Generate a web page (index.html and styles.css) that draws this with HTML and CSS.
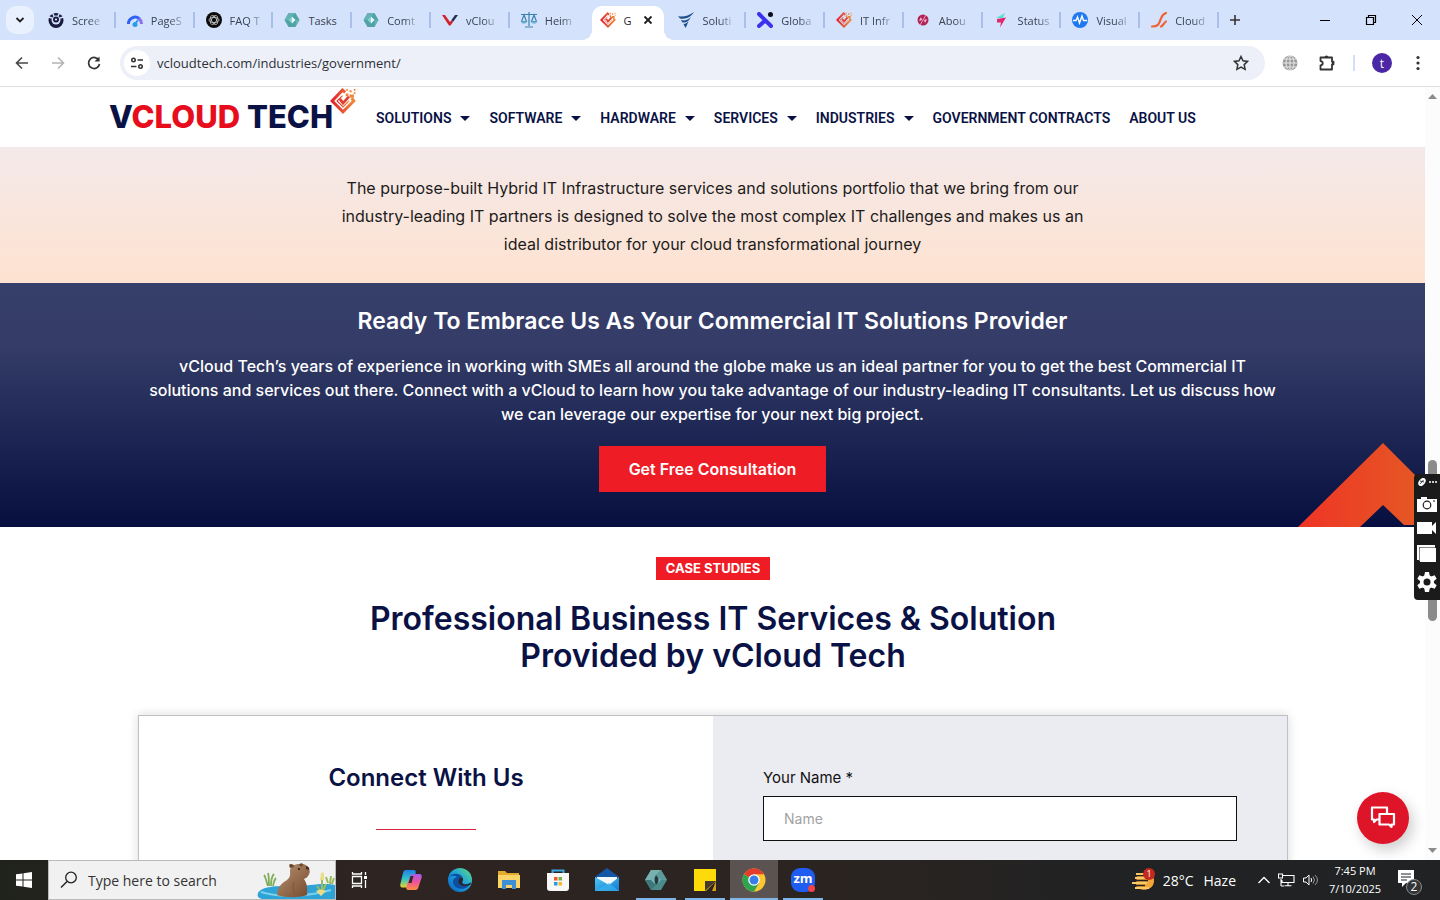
FILE: index.html
```html
<!DOCTYPE html>
<html lang="en">
<head>
  <meta charset="UTF-8">
  <meta name="viewport" content="width=device-width, initial-scale=1.0">
  <title>Government - vCloud Tech</title>
  <link rel="stylesheet" href="styles.css">
</head>
<body>
  <!-- shared symbols -->
  <svg class="defs" width="0" height="0" aria-hidden="true">
    <defs>
      <linearGradient id="brand" x1="0" y1="0" x2="1" y2="0">
        <stop offset="0" stop-color="#e2232b"/><stop offset="1" stop-color="#f08a3c"/>
      </linearGradient>
      <linearGradient id="arrow" x1="0" y1="0" x2="1" y2="0">
        <stop offset="0" stop-color="#ef3426"/><stop offset="1" stop-color="#e45a24"/>
      </linearGradient>
      <linearGradient id="edge" x1="0" y1="1" x2="1" y2="0">
        <stop offset="0" stop-color="#0b5fb8"/><stop offset="0.5" stop-color="#1b9de2"/><stop offset="1" stop-color="#5fe07a"/>
      </linearGradient>
      <linearGradient id="cop1" x1="0" y1="0" x2="0" y2="1">
        <stop offset="0" stop-color="#1f7fe8"/><stop offset="0.5" stop-color="#2fc3c9"/><stop offset="1" stop-color="#e8d32a"/>
      </linearGradient>
      <linearGradient id="cop2" x1="0" y1="0" x2="0" y2="1">
        <stop offset="0" stop-color="#a45cf0"/><stop offset="0.5" stop-color="#f0529a"/><stop offset="1" stop-color="#fb9040"/>
      </linearGradient>
      <linearGradient id="mailg" x1="0" y1="0" x2="1" y2="1">
        <stop offset="0" stop-color="#4cc8f4"/><stop offset="1" stop-color="#1478d4"/>
      </linearGradient>
      <linearGradient id="fur" x1="0" y1="0" x2="1" y2="1">
        <stop offset="0" stop-color="#b89470"/><stop offset="1" stop-color="#75492f"/>
      </linearGradient>
      <symbol id="mark" viewBox="0 0 24 24">
        <path d="M14 4 11.500 2 2 12l10 10 10-10-2-2.500" fill="none" stroke="url(#brand)" stroke-width="2.800"/>
        <path d="M11.500 7 6.500 12l5.500 5.500 5.500-5.500" fill="none" stroke="url(#brand)" stroke-width="1"/>
        <path d="m9 10 3 4 5.500-6" fill="none" stroke="#e2402c" stroke-width="2.600"/>
        <path d="M14.500 5h2.500v2.500h-2.500zM18 2h2v2h-2zM18 6h4v3h-4zM22 1h1.500v1.500H22zM15 1h1.500v1.500H15zM22 4h1.500v1.500H22z" fill="#ef8438"/>
      </symbol>
      <symbol id="hex" viewBox="0 0 16 16">
        <path d="M4.500 1h7l4 7-4 7h-7l-4-7z" fill="#4fa3a5"/>
        <path d="M4.500 1h7L8 4.500 4.500 8h-4zM11.500 15l4-7H12z" fill="#77bdbb" opacity=".6"/>
        <path d="M8 4.500 11.500 8 8 11.500z" fill="#e6fbff"/>
        <path d="M8 4.500 4.500 8 8 11.500z" fill="#8fd0d2"/>
      </symbol>
      <symbol id="hex-dark" viewBox="0 0 22 22">
        <path d="M6 1h10l6 10-6 10H6L0 11z" fill="#4b8b8c"/>
        <path d="M6 1h10l-5 5-5 5H0z" fill="#78b2b0"/>
        <path d="m16 1 6 10h-6l-5-5z" fill="#5d9b9b"/>
        <path d="M0 11h6l5 5-5 5z" fill="#3c7879"/>
        <path d="m11 6 5 5-5 5-5-5z" fill="#76b5b7"/>
        <path d="M11 6q5 5 0 10-3-5 0-10z" fill="#203a40"/>
      </symbol>
    </defs>
  </svg>

  <header class="tabstrip">
    <button class="tab-search" aria-label="Search tabs">
      <svg width="10" height="10" viewBox="0 0 10 10"><path d="m1.500 3 3.500 3.500L8.500 3" fill="none" stroke="#1f1f1f" stroke-width="1.800"/></svg>
    </button>
    <nav class="tabs" aria-label="Tabs">
      <a class="tab" href="#"><svg viewBox="0 0 16 16"><circle cx="8" cy="8.500" r="7.500" fill="#191b40"/><path d="M4 0l2 4M12 0l-2 4M0 5l4 1M16 5l-4 1" stroke="#d5e2fb" stroke-width="1.500"/><circle cx="8" cy="8" r="4.500" fill="#d5e2fb"/><circle cx="8" cy="7.500" r="3" fill="#191b40"/><circle cx="8" cy="7.500" r="1" fill="#fff"/></svg><span>Scree</span></a>
      <a class="tab" href="#"><svg viewBox="0 0 16 16"><path d="M1.500 12a6.500 6.500 0 0 1 11-5" fill="none" stroke="#2f63f2" stroke-width="3"/><path d="M12 6.500A7 7 0 0 1 14.500 12" fill="none" stroke="#8b6ef5" stroke-width="3"/><circle cx="8" cy="12.500" r="2.500" fill="#2a9cf0"/><path d="m8 12 3-4" stroke="#2a9cf0" stroke-width="2"/></svg><span>PageS</span></a>
      <a class="tab" href="#"><svg viewBox="0 0 16 16"><circle cx="8" cy="8" r="8" fill="#0c0c0c"/><g fill="none" stroke="#ccc" stroke-width=".8"><ellipse cx="8" cy="8" rx="5" ry="2.500"/><ellipse cx="8" cy="8" rx="5" ry="2.500" transform="rotate(60 8 8)"/><ellipse cx="8" cy="8" rx="5" ry="2.500" transform="rotate(120 8 8)"/></g></svg><span>FAQ T</span></a>
      <a class="tab" href="#"><svg><use href="#hex"/></svg><span>Tasks</span></a>
      <a class="tab" href="#"><svg><use href="#hex"/></svg><span>Comt</span></a>
      <a class="tab" href="#"><svg viewBox="0 0 16 16"><path d="M0 3h3l5 7 1.500-2L11 10l-2.500 3.500H7z" fill="#d3202f"/><path d="M9.500 8 13 3h3l-5 7z" fill="#26304a"/></svg><span>vClou</span></a>
      <a class="tab" href="#"><svg viewBox="0 0 16 16"><path d="M0 2.500h16M8 0v14M4 15h8M3 3 .5 9.500h5zM13 3l-2.500 6.500h5z" fill="none" stroke="#3a83ad" stroke-width="1.200"/><path d="M0 9.500h6c-.5 3-5.500 3-6 0zM10 9.500h6c-.5 3-5.500 3-6 0z" fill="#73b4d8"/></svg><span>Heim</span></a>
      <a class="tab active" href="#"><svg><use href="#mark"/></svg><span>G</span><svg class="close" viewBox="0 0 10 10"><path d="m1.500 1.500 7 7m0-7-7 7" stroke="#1f1f1f" stroke-width="1.800"/></svg></a>
      <a class="tab" href="#"><svg viewBox="0 0 16 16"><path d="M0 4c5 1.500 10 0 16-4-3 5-8 7.500-14 6.500zM3 8c4 1 7 0 10-3-2 4-5 6-8.500 5.500zM5.500 12c2 0 3.500-1 5-3-1 3-2 5-3 7z" fill="#1d4e89"/></svg><span>Soluti</span></a>
      <a class="tab" href="#"><svg viewBox="0 0 16 16"><path d="m2 2 12 12M9 9l-2.500 1L2 14" fill="none" stroke="#3c32ee" stroke-width="4" stroke-linecap="round"/><circle cx="13.500" cy="2.500" r="2.500" fill="#0c0c22"/></svg><span>Globa</span></a>
      <a class="tab" href="#"><svg><use href="#mark"/></svg><span>IT Infr</span></a>
      <a class="tab" href="#"><svg viewBox="0 0 16 16"><circle cx="8" cy="8" r="5.500" fill="#b32256"/><path d="m4 9 2-4 1 3zm8-2-2 4-1-3z" fill="#f0c9dc"/><path d="m5 13 6-10" stroke="#f0c9dc" stroke-width=".8"/></svg><span>Abou</span></a>
      <a class="tab" href="#"><svg viewBox="0 0 16 16"><path d="M2 6 11 1 9 6z" fill="#5ee0d0"/><path d="m3 7 9-1.500L6 15.500 7 10.500H3z" fill="#e3246f"/></svg><span>Status</span></a>
      <a class="tab" href="#"><svg viewBox="0 0 16 16"><circle cx="8" cy="8" r="8" fill="#1f78f0"/><path d="M1 8.500h3L5.500 5l2 6L10 4l1.500 4.500H15" fill="none" stroke="#fff" stroke-width="1.400"/></svg><span>Visual</span></a>
      <a class="tab" href="#"><svg viewBox="0 0 16 16"><path d="M1 14.500c7 0 7-3 9-8 1-3 2-4.500 5-5.500M10 14.500c2-1 2.500-3 5-5" fill="none" stroke="#ee6338" stroke-width="2.200" stroke-linecap="round"/></svg><span>Cloud</span></a>
    </nav>
    <button class="new-tab" aria-label="New tab"><svg width="12" height="12" viewBox="0 0 12 12"><path d="M6 1v10M1 6h10" stroke="#333" stroke-width="1.600"/></svg></button>
    <div class="window-buttons">
      <button aria-label="Minimize"><svg width="12" height="12" viewBox="0 0 12 12"><path d="M1 6.500h10" stroke="#000"/></svg></button>
      <button aria-label="Restore"><svg width="12" height="12" viewBox="0 0 12 12"><path d="M1.500 3.500h7v7h-7zM3.500 3.500v-2h7v7h-2" fill="none" stroke="#000" stroke-width="1.200"/></svg></button>
      <button aria-label="Close"><svg width="12" height="12" viewBox="0 0 12 12"><path d="m1 1 10 10m0-10L1 11" stroke="#000"/></svg></button>
    </div>
  </header>

  <div class="toolbar">
    <button aria-label="Back"><svg width="16" height="16" viewBox="0 0 16 16"><path d="M14 8H3M8 2.500 2.500 8 8 13.500" fill="none" stroke="#474747" stroke-width="1.600"/></svg></button>
    <button aria-label="Forward"><svg width="16" height="16" viewBox="0 0 16 16"><path d="M2 8h11M8 2.500 13.500 8 8 13.500" fill="none" stroke="#b4b4b4" stroke-width="1.600"/></svg></button>
    <button aria-label="Reload"><svg width="16" height="16" viewBox="0 0 16 16"><path d="M13 5.500A5.500 5.500 0 1 0 13.500 9" fill="none" stroke="#333" stroke-width="1.700"/><path d="M13.500 1.500v5h-5z" fill="#333"/></svg></button>
    <div class="address">
      <button class="site-info" aria-label="Site information"><svg width="14" height="14" viewBox="0 0 14 14"><g fill="none" stroke="#333" stroke-width="1.600"><circle cx="3.500" cy="4" r="1.700"/><path d="M7.500 4H13M1 10.500h5.500"/><circle cx="10.500" cy="10.500" r="1.700"/></g></svg></button>
      <input type="text" class="url" aria-label="Address" value="vcloudtech.com/industries/government/">
      <button class="star" aria-label="Bookmark"><svg width="16" height="16" viewBox="0 0 16 16"><path d="m8 1.500 2 4.300 4.600.6-3.400 3.200.9 4.700L8 12l-4.100 2.300.9-4.700L1.400 6.400 6 5.800z" fill="none" stroke="#333" stroke-width="1.500"/></svg></button>
    </div>
    <div class="extensions">
      <button aria-label="Translate extension"><svg width="16" height="16" viewBox="0 0 16 16"><circle cx="8" cy="8" r="7.500" fill="#999"/><path d="M8 0v16M0 8h16M1.500 4h13M1.500 12h13" fill="none" stroke="#e8e8e8"/><ellipse cx="8" cy="8" rx="4" ry="7.500" fill="none" stroke="#e8e8e8"/></svg></button>
      <button aria-label="Extensions"><svg width="18" height="18" viewBox="0 0 18 18"><path d="M2.500 3.500H14v4.200h1.500v2.600H14v5.200H2.500v-4.200c3-.5 3-3.800 0-4.200z" fill="none" stroke="#333" stroke-width="1.800" stroke-linejoin="round"/><path d="M6.500 3.500a2 2 0 0 1 4 0M14 7a2 2 0 0 1 0 4" fill="#333"/></svg></button>
      <span class="bar"></span>
      <button class="profile" aria-label="Profile">t</button>
      <button class="more" aria-label="Menu"><svg width="4" height="16" viewBox="0 0 4 16"><g fill="#333"><circle cx="2" cy="2.500" r="1.600"/><circle cx="2" cy="8" r="1.600"/><circle cx="2" cy="13.500" r="1.600"/></g></svg></button>
    </div>
  </div>

  <div class="viewport">
    <main class="page">
      <div class="site-header">
        <a class="logo" href="#" aria-label="vCloud Tech"><span>V<b>CLOUD</b> TECH</span><svg width="26" height="26"><use href="#mark"/></svg></a>
        <nav class="menu">
          <a class="has-sub" href="#">Solutions</a>
          <a class="has-sub" href="#">Software</a>
          <a class="has-sub" href="#">Hardware</a>
          <a class="has-sub" href="#">Services</a>
          <a class="has-sub" href="#">Industries</a>
          <a href="#">Government Contracts</a>
          <a href="#">About Us</a>
        </nav>
      </div>

      <section class="intro">
        <p>The purpose-built Hybrid IT Infrastructure services and solutions portfolio that we bring from our<br>industry-leading IT partners is designed to solve the most complex IT challenges and makes us an<br>ideal distributor for your cloud transformational journey</p>
      </section>

      <section class="cta">
        <h2>Ready To Embrace Us As Your Commercial IT Solutions Provider</h2>
        <p>vCloud Tech’s years of experience in working with SMEs all around the globe make us an ideal partner for you to get the best Commercial IT<br>solutions and services out there. Connect with a vCloud to learn how you take advantage of our industry-leading IT consultants. Let us discuss how<br>we can leverage our expertise for your next big project.</p>
        <a class="cta-btn" href="#contact">Get Free Consultation</a>
        <svg class="cta-arrow" width="127" height="84" viewBox="0 0 127 84"><path d="M0 84 85 0l42 42v40h-21L85 62 62 84z" fill="url(#arrow)"/></svg>
      </section>

      <section class="cases">
        <span class="badge">CASE STUDIES</span>
        <h2>Professional Business IT Services &amp; Solution<br>Provided by vCloud Tech</h2>
        <div class="contact" id="contact">
          <div class="contact-info">
            <h3>Connect With Us</h3>
            <hr>
          </div>
          <form class="contact-form">
            <label for="name">Your Name *</label>
            <input type="text" id="name" placeholder="Name">
          </form>
        </div>
      </section>
    </main>

    <div class="scrollbar">
      <svg width="9" height="5" viewBox="0 0 9 5"><path d="M0 5 4.500 0 9 5z" fill="#8b8b8b"/></svg>
      <div class="track"><div class="thumb"></div></div>
      <svg width="9" height="5" viewBox="0 0 9 5"><path d="m0 0 4.500 5L9 0z" fill="#8b8b8b"/></svg>
    </div>

    <button class="chat" aria-label="Chat">
      <svg width="26" height="24" viewBox="0 0 26 24"><g fill="none" stroke="#fff" stroke-width="2.200" stroke-linejoin="round"><path d="M9 13.500H6.500L4 16v-2.500H2v-12h15v6"/><path d="M9.500 8h14.500v10.500h-2.500V21L19 18.500H9.500z"/></g></svg>
    </button>
  </div>

  <aside class="recorder">
    <svg width="20" height="8" viewBox="0 0 20 8"><ellipse cx="5" cy="4" rx="4.500" ry="3" transform="rotate(-50 5 4)" fill="#fff"/><path d="m3 6 3.500-4M3 3l4 1" stroke="#1b1b1b" stroke-width=".8"/><path d="M12 4h2M15 4h2M18 4h2" stroke="#fff" stroke-width="1.600"/></svg>
    <button aria-label="Screenshot"><svg width="20" height="16" viewBox="0 0 20 16"><path d="M0 3h4V1h6v2h10v13H0z" fill="#fff"/><circle cx="10" cy="9" r="3.800" fill="none" stroke="#1b1b1b" stroke-width="1.200"/><path d="M16 5h2" stroke="#1b1b1b"/></svg></button>
    <button aria-label="Record"><svg width="20" height="14" viewBox="0 0 20 14"><path d="M0 1h15v4l4-4v12l-4-4v4H0z" fill="#fff"/></svg></button>
    <button aria-label="Gallery"><svg width="20" height="18" viewBox="0 0 20 18"><path d="M0 0h18v2H2v13H0z" fill="#fff"/><path d="M3 3h16v14H3z" fill="#fff"/><path d="M2.500 16V2.500H18" fill="none" stroke="#888"/></svg></button>
    <button aria-label="Settings"><svg width="20" height="20" viewBox="0 0 20 20"><g fill="#fff"><circle cx="10" cy="10" r="7"/><path d="M8 0h4l1 5H7zM8 20h4l1-5H7z"/><path d="M8 0h4l1 5H7zM8 20h4l1-5H7z" transform="rotate(60 10 10)"/><path d="M8 0h4l1 5H7zM8 20h4l1-5H7z" transform="rotate(120 10 10)"/></g><circle cx="10" cy="10" r="3.500" fill="#1b1b1b"/></svg></button>
  </aside>

  <footer class="taskbar">
    <button class="start" aria-label="Start"><svg width="16" height="16" viewBox="0 0 16 16"><path d="M0 2.300 6.500 1.400v6.100H0zM7.500 1.200 16 0v7.500H7.500zM0 8.500h6.500v6.100L0 13.700zM7.500 8.500H16V16l-8.500-1.200z" fill="#fff"/></svg></button>
    <div class="search">
      <svg width="18" height="18" viewBox="0 0 18 18"><circle cx="11" cy="6.500" r="5.300" fill="none" stroke="#222" stroke-width="1.300"/><path d="m7 10.500-6 6" stroke="#222" stroke-width="1.400"/></svg>
      <input type="text" aria-label="Search" placeholder="Type here to search">
      <svg class="capybara" width="78" height="36" viewBox="0 0 78 36">
        <path d="M1 30c4-7 18-7 34-7 18 0 31-4 43-1v14H5C1 35 0 33 1 30z" fill="#2ea3d8"/>
        <path d="M4 29c18 6 50 4 70-2" fill="none" stroke="#7cd0ee" stroke-width="2"/>
        <path d="M11 23c-2-5-2-9-4-11m5 11c0-7 0-10-1-13m3 13c0-6 1-10 3-12m-1 12c1-5 2-7 3-8" fill="none" stroke="#7fae5c" stroke-width="1.800"/>
        <path d="M20 32c0-8 5-12 10-15 4-3 3-6 3-10 1-4 5-6 9-6 4-1 8 1 10 4 1 3 1 6-1 8-1 2-3 2-4 3 2 3 4 7 3 16-8 3-22 3-30 0z" fill="url(#fur)"/>
        <path d="M33 5q-2-4 1-4t3 3zM42 2q2-3 4-1l-1 3z" fill="#6b4630"/>
        <circle cx="42" cy="6" r="1" fill="#211"/><path d="M49 3q4 1 3 4l-3-1z" fill="#4b2d20"/>
        <path d="M37 19c-2 4-1 9 1 12" fill="none" stroke="#7b5438"/>
        <path d="M65 31V14m0 16-5-7m5 6 4-8M71 20l-2-6m4 7 1-8m1 8 2-6" fill="none" stroke="#9cbb5c" stroke-width="2"/>
        <path d="M64 10q2-2 3 1v6h-4zM59 28q5-3 10 0l-5 5z" fill="#e7dc8a"/>
      </svg>
    </div>
    <nav class="apps" aria-label="Apps">
      <button class="task-view" aria-label="Task View"><svg width="18" height="16" viewBox="0 0 18 16"><path d="M1.500 4.500h9v7h-9zM1.500 0v2h9V0M1.500 16v-2h9v2M14.500 0v3M14.500 8v8" fill="none" stroke="#fff" stroke-width="1.300"/><path d="M13 4h3v3h-3z" fill="#fff"/></svg></button>
      <button aria-label="Copilot"><svg width="24" height="24" viewBox="0 0 24 24"><path d="M7 2h8c2 0 2 2 1.500 3.500L13 17c-.5 2-2 2.500-4 2.500H4c-3 0-3-2-2.500-4L4 5c.5-2 1-3 3-3z" fill="url(#cop1)"/><path d="M14.500 6H20c3 0 3 2 2.500 4l-3 9c-.5 2-1.500 3-3.500 3H9c-1.500 0-2-1.500-1.500-3L11 8c.5-1.500 1.500-2 3.500-2z" fill="url(#cop2)"/><path d="m11.500 8-2 7h3l2-7z" fill="#342a2a"/></svg></button>
      <button aria-label="Edge"><svg width="24" height="24" viewBox="0 0 24 24"><circle cx="12" cy="12" r="12" fill="url(#edge)"/><path d="M1 9c3-5 13-4 14 2 0 2-1.500 3-1 4 1 2 6 2 9-1-3 8-13 9-17 3-2-3-1-7 3-8-4-2-7-1-8 0z" fill="#0d4f9e"/><path d="M12 10c3-1 4 2 2 4 0 3 5 3 9 1l-.5 1.500c-5 3-12 1-12-3 0-1.500.5-2.500 1.500-3.500z" fill="#2c2423"/></svg></button>
      <button aria-label="File Explorer"><svg width="22" height="20" viewBox="0 0 22 20"><path d="M0 1h7l2 2h12v15H0z" fill="#e5a92d"/><path d="M0 5h22v13H0z" fill="#fbd567"/><path d="M4 10h14v9h-4v-4H8v4H4z" fill="#3f8fd6"/></svg></button>
      <button aria-label="Store"><svg width="24" height="24" viewBox="0 0 24 24"><path d="M6.500 6V2.500h11V6" fill="none" stroke="#39a9df" stroke-width="2"/><path d="M1 5h22v15q0 3-3 3H4q-3 0-3-3z" fill="#f7f7f7"/><path d="M8 9h3.500v3.500H8z" fill="#ea5a2b"/><path d="M12.500 9H16v3.500h-3.500z" fill="#75b043"/><path d="M8 14h3.500v3.500H8z" fill="#2b9be0"/><path d="M12.500 14H16v3.500h-3.500z" fill="#f4b82a"/></svg></button>
      <button aria-label="Mail"><svg width="24" height="24" viewBox="0 0 24 24"><path d="M0 9 12 0l12 9v3H0z" fill="#1457a6"/><path d="M2 9h20v8H2z" fill="#f2f8fc"/><path d="m0 9 14 8L24 9v14H0z" fill="url(#mailg)"/><path d="M0 23 14 15l10 8z" fill="#39b4ec" opacity=".7"/></svg></button>
      <button class="open" aria-label="Time tracker"><svg width="22" height="22"><use href="#hex-dark"/></svg></button>
      <button class="open" aria-label="Sticky Notes"><svg width="22" height="22" viewBox="0 0 22 22"><path d="M0 0h22v12L12 22H0z" fill="#fddb0a"/><path d="M11 12h11L11 22z" fill="#443b2e"/><path d="m22 12-4 10h4z" fill="#d69c19"/></svg></button>
      <button class="open current" aria-label="Chrome"><svg width="24" height="24" viewBox="0 0 24 24"><circle cx="12" cy="12" r="11.500" fill="#fbc62f"/><path d="M12 12 2 6.200A11.500 11.500 0 0 1 22 6.200H12z" fill="#e33b2e"/><path d="M12 12 2 6.200A11.500 11.500 0 0 0 12 23.500l5-8.500z" fill="#2da44e"/><circle cx="12" cy="12" r="5.800" fill="#fff"/><circle cx="12" cy="12" r="4.500" fill="#3b7de8"/></svg></button>
      <button class="open zoom-app" aria-label="Zoom"><span>zm</span></button>
    </nav>
    <div class="tray">
      <button class="weather"><svg width="26" height="24" viewBox="0 0 26 24"><path d="M6 5h12a9 9 0 0 1 5 9 10 9 0 0 1-18 4z" fill="#f3a738"/><path d="M5 7.500h11M2 12.500h15M1 17.500h13" stroke="#202224" stroke-width="1.500"/><path d="M5 6h11M4 10h11M1 15h15M4 20h14" stroke="#fbc868" stroke-width="2"/><circle cx="18" cy="6" r="6" fill="#c4291f"/><text x="18" y="9" text-anchor="middle" class="weather-count">1</text></svg><span>28°C</span><span>Haze</span></button>
      <button aria-label="Show hidden icons"><svg width="12" height="8" viewBox="0 0 12 8"><path d="m.5 7 5.500-5.500L11.500 7" fill="none" stroke="#fff" stroke-width="1.300"/></svg></button>
      <button aria-label="Network"><svg width="17" height="14" viewBox="0 0 17 14"><path d="M5 2.500h11v7H4V7M10 9.500v3M6.500 12.800h7M3 6v7M.5 1h4v4h-4zM3 13h3" fill="none" stroke="#fff" stroke-width="1.100"/></svg></button>
      <button aria-label="Volume"><svg width="16" height="12" viewBox="0 0 16 12"><path d="M.5 4H3l3-3v10L3 8H.5z" fill="none" stroke="#fff"/><path d="M8 4q1.500 2 0 4" fill="none" stroke="#fff"/><path d="M10 2.500q3 3.500 0 7M12 1q5 5 0 10" fill="none" stroke="#999"/></svg></button>
      <div class="clock"><time>7:45 PM</time><time>7/10/2025</time></div>
      <button class="notes" aria-label="Notifications"><svg width="26" height="32" viewBox="0 0 26 32"><path d="M0 6h16v13H8l-4 4v-4H0z" fill="#fff"/><path d="M3 10h10M3 13h10M3 16h6" stroke="#202224" stroke-width="1.200"/><circle cx="16" cy="23" r="7.500" fill="#323436" stroke="#8a8a8a"/><text x="16" y="27" text-anchor="middle" class="note-count">2</text></svg></button>
    </div>
  </footer>
</body>
</html>
```
FILE: styles.css
```css
* { box-sizing: border-box; }
html, body { height: 100%; margin: 0; }
body {
  display: flex;
  flex-direction: column;
  overflow: hidden;
  background: #fff;
  font-family: Inter, "Liberation Sans", sans-serif;
  color: #0a1245;
}
a { color: inherit; text-decoration: none; }
button { flex: none; border: 0; padding: 0; background: none; font: inherit; color: inherit; display: flex; align-items: center; justify-content: center; cursor: pointer; }
input { font: inherit; }
svg { flex: none; display: block; }
.defs { position: absolute; }

/* browser tabs */
.tabstrip, .toolbar, .taskbar { font-family: "Open Sans", "Noto Sans", sans-serif; flex: none; }
.tabstrip { display: flex; height: 40px; background: #d4e2fc; }
.tab-search { width: 28px; height: 28px; margin: 6px 3px 0 6px; border-radius: 10px; background: #eaf1fe; }
.tabs { flex: 1; min-width: 0; display: grid; grid-auto-flow: column; grid-auto-columns: minmax(0, 1fr); }
.tab {
  position: relative;
  display: flex;
  align-items: center;
  gap: 8px;
  padding: 0 4px 0 11px;
  font-size: 11px;
  color: #3a4252;
}
.tab svg { width: 16px; height: 16px; }
.tab span {
  white-space: nowrap;
  -webkit-mask-image: linear-gradient(to right, #000 60%, rgba(0, 0, 0, .3));
  mask-image: linear-gradient(to right, #000 60%, rgba(0, 0, 0, .3));
}
.tab::after { content: ""; position: absolute; right: 0; top: 12px; width: 2px; height: 16px; background: #a9bfe9; }
.tab:nth-child(4) span, .tab.active span { -webkit-mask-image: none; mask-image: none; }
.tab:nth-child(7)::after { display: none; }
.tab.active { color: #1f1f1f; padding-right: 14px; z-index: 1; }
.tab.active::before {
  content: "";
  position: absolute;
  z-index: -1;
  top: 6px; bottom: 0; left: 3px; right: 3px;
  border-radius: 10px 10px 0 0;
  background: #fff;
}
.tab.active::after {
  z-index: -1;
  top: auto; bottom: 0; left: -7px; right: -7px;
  width: auto;
  height: 10px;
  background:
    radial-gradient(circle at 0 0, transparent 10px, #fff 10px) left / 10px 10px no-repeat,
    radial-gradient(circle at 100% 0, transparent 10px, #fff 10px) right / 10px 10px no-repeat;
}
.tab .close { width: 10px; height: 10px; margin-left: auto; }
.new-tab { width: 28px; margin: 0 53px 0 2px; }
.window-buttons { display: flex; }
.window-buttons button { width: 46px; }

/* address row */
.toolbar { display: flex; align-items: center; height: 47px; padding: 0 4px; border-bottom: 1px solid #dcdfe3; background: #fff; }
.toolbar > button { width: 36px; height: 34px; }
.address { flex: 1; display: flex; align-items: center; height: 34px; margin-left: 8px; padding: 0 16px 0 4px; border-radius: 17px; background: #edf0f9; }
.site-info { width: 26px; height: 26px; border-radius: 50%; background: #fff; }
.url { flex: 1; padding: 0 7px; border: 0; outline: 0; background: none; font-size: 13px; color: #2d3036; }
.extensions { display: flex; align-items: center; gap: 20px; padding: 0 16px 0 17px; }
.bar { width: 2px; height: 16px; margin: 0 -3px; background: #d4dff4; }
.profile { width: 20px; height: 20px; border-radius: 50%; background: #4c27a5; color: #fff; font-size: 12px; }
.more { margin-left: 4px; }

/* page */
.viewport { position: relative; flex: 1; min-height: 0; display: flex; overflow: hidden; }
.page { flex: 1; min-width: 0; overflow: hidden; }
.site-header { display: flex; align-items: center; height: 61px; padding: 0 109px; border-bottom: 1px solid #efe9ea; }
.logo { display: flex; width: 246px; font-size: 31px; font-weight: 800; line-height: 60px; white-space: nowrap; }
.logo b { font-weight: 800; color: #e70d1c; }
.logo svg { margin: 1px 0 0 -3px; }
.menu { display: flex; gap: 19px; margin-left: 21px; padding-top: 2px; font-family: Roboto, "Liberation Sans", sans-serif; font-size: 14px; font-weight: 600; line-height: 18px; text-transform: uppercase; white-space: nowrap; }
.has-sub { display: flex; align-items: center; gap: 9px; }
.has-sub::after { content: ""; border: 5px solid transparent; border-top-color: #0a1245; border-bottom: 0; }

.intro { height: 135px; padding: 26px 20px; background: linear-gradient(#f4e9e9, #fee2d0); color: #1c1c1c; text-align: center; font-size: 16px; line-height: 28px; }
.intro p { margin: 0; }

.cta { position: relative; height: 244px; padding: 22px 20px 0; background: linear-gradient(#363f69, #343c67 25%, #070f40); color: #fff; text-align: center; }
.cta h2 { margin: 0 0 17px; font-size: 23px; font-weight: 600; line-height: 32px; }
.cta p { margin: 0 0 20px; font-size: 16px; font-weight: 500; line-height: 24px; }
.cta-btn { display: inline-block; padding: 0 30px; background: #ee1c25; font-size: 16px; font-weight: 600; line-height: 46px; }
.cta-arrow { position: absolute; right: 0; bottom: 0; }

.cases { padding: 30px 137px 0 138px; text-align: center; }
.badge { display: inline-block; padding: 0 10px; background: #f01c25; color: #fff; font-size: 13px; font-weight: 700; line-height: 23px; }
.cases h2 { margin: 20px 0 41px; font-size: 32px; font-weight: 600; line-height: 37px; }
.contact { display: grid; grid-template-columns: 1fr 1fr; border: 1px solid #bfc0c6; box-shadow: 0 0 10px rgba(0, 0, 0, .15); height: 400px; }
.contact-info { padding: 46px 20px; }
.contact-info h3 { margin: 0; font-size: 24px; font-weight: 600; line-height: 32px; }
.contact-info hr { width: 100px; height: 1px; margin: 35px auto; border: 0; background: #d81f3c; }
.contact-form { padding: 50px; background: #ebecf1; text-align: left; }
.contact-form label { display: block; margin-bottom: 6px; font-size: 15px; line-height: 24px; color: #111; }
.contact-form input { width: 100%; height: 45px; padding: 0 20px; border: 1px solid #111; background: #fff; font-size: 14px; }
.contact-form input::placeholder { color: #a2a2a2; }

.scrollbar { width: 15px; display: flex; flex-direction: column; align-items: center; padding: 7px 0; background: #fcfcfc; }
.track { flex: 1; display: flex; flex-direction: column; margin: 4px 0; }
.track::before { content: ""; flex: 359; }
.thumb { flex: 162; width: 9px; border-radius: 5px; background: #8b8b8b; }
.track::after { content: ""; flex: 224; }

.chat { position: absolute; right: 31px; bottom: 16px; width: 52px; height: 52px; border-radius: 50%; background: #de1529; box-shadow: 4px 6px 14px rgba(0, 0, 0, .2); }

/* floating capture bar */
.recorder { position: fixed; right: 0; top: 474px; width: 26px; padding: 4px 3px 8px; display: flex; flex-direction: column; justify-content: space-between; height: 126px; border-radius: 4px 0 0 4px; background: #1b1b1b; }

/* taskbar */
.taskbar { display: flex; height: 40px; background: linear-gradient(to right, #20221c, #2e2422 25%, #2a2421 60%, #202224 80%); color: #fff; }
.start { width: 48px; }
.search { display: flex; align-items: center; width: 288px; padding-left: 11px; border: 1px solid #bbb; background: #f1f1f1; }
.search input { flex: 1; min-width: 0; padding: 0 0 0 10px; border: 0; outline: 0; background: none; font-size: 14px; }
.search input::placeholder { color: #333; }
.capybara { align-self: flex-end; }
.apps { display: flex; gap: 1px; }
.apps button { position: relative; width: 48px; }
.apps .task-view { margin-right: 2px; }
.open::after { content: ""; position: absolute; bottom: 0; left: 4px; right: 4px; height: 2px; background: #7fb6e6; }
.current { background: #5a5352; }
.current::after { left: 0; right: 0; }
.zoom-app span { position: relative; width: 24px; height: 24px; border-radius: 9px; background: #1f5cf0; font-size: 13px; font-weight: 700; line-height: 21px; }
.zoom-app span::after { content: ""; position: absolute; right: 0; bottom: 0; width: 7px; height: 7px; border-radius: 50%; background: #f0434a; }
.tray { display: flex; align-items: center; gap: 8px; margin-left: auto; padding-right: 16px; }
.weather { gap: 10px; margin-right: 14px; font-size: 14px; }
.weather span:first-of-type { margin-left: -4px; }
.weather-count { font-size: 9px; fill: #fff; }
.note-count { font-size: 12px; fill: #fff; }
.clock { display: flex; flex-direction: column; align-items: center; width: 56px; font-size: 11px; line-height: 18px; }
.notes { margin-left: 7px; }
```
